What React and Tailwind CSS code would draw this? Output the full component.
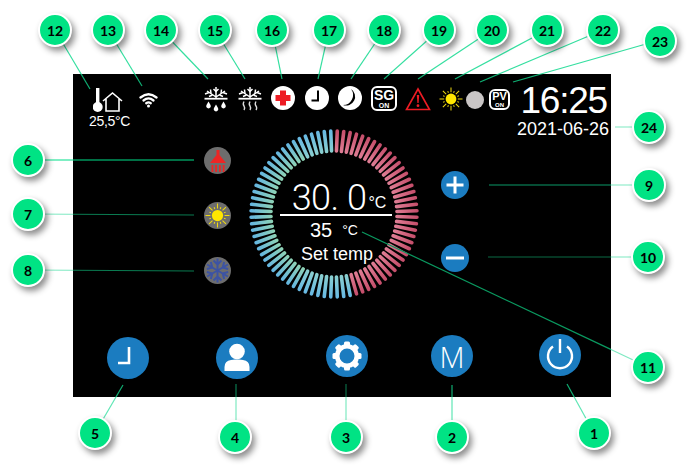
const leaders = [
  // x1, y1, x2, y2, colour on black, colour on white
  [55, 30, 90, 89, "#0fae72", "#35dfa0"],
  [108, 30, 142, 86, "#0fae72", "#35dfa0"],
  [161, 30, 208, 79, "#0fae72", "#35dfa0"],
  [215, 30, 245, 79, "#0fae72", "#35dfa0"],
  [272, 30, 282, 79, "#0fae72", "#35dfa0"],
  [329, 30, 318, 79, "#0fae72", "#35dfa0"],
  [384, 30, 351, 79, "#0fae72", "#35dfa0"],
  [439, 30, 384, 79, "#0fae72", "#35dfa0"],
  [492, 30, 418, 79, "#0fae72", "#35dfa0"],
  [547, 30, 455, 79, "#0fae72", "#35dfa0"],
  [603, 30, 480, 82, "#0fae72", "#35dfa0"],
  [660, 40, 513, 82, "#0fae72", "#35dfa0"],
  [615, 127, 649, 127, "#0fae72", "#7fe9c2"],
  [28, 160, 194, 160, "#00e08a", "#00e08a"],
  [28, 214, 194, 215, "#0a7a50", "#7fe9c2"],
  [28, 270, 194, 271, "#0a7a50", "#7fe9c2"],
  [649, 185, 489, 185, "#0b9a68", "#7fe9c2"],
  [648, 257, 488, 257, "#0a6a45", "#7fe9c2"],
  [648, 367, 362, 232, "#0a9a60", "#7fe9c2"],
  [95, 433, 123, 385, "#0fae72", "#5fe6b5"],
  [236, 437, 236, 384, "#0a7a50", "#7fe9c2"],
  [346, 437, 346, 384, "#0a6a45", "#7fe9c2"],
  [452, 437, 452, 385, "#0fae72", "#5fe6b5"],
  [594, 433, 567, 384, "#0fae72", "#5fe6b5"],
];

const badges = [
  ["1", "left-[577px] top-[416px]"],
  ["2", "left-[435px] top-[420px]"],
  ["3", "left-[329px] top-[420px]"],
  ["4", "left-[218px] top-[420px]"],
  ["5", "left-[78px] top-[416px]"],
  ["6", "left-[11px] top-[143px]"],
  ["7", "left-[11px] top-[197px]"],
  ["8", "left-[11px] top-[253px]"],
  ["9", "left-[632px] top-[168px]"],
  ["10", "left-[631px] top-[240px]"],
  ["11", "left-[631px] top-[350px]"],
  ["12", "left-[38px] top-[13px]"],
  ["13", "left-[91px] top-[13px]"],
  ["14", "left-[144px] top-[13px]"],
  ["15", "left-[198px] top-[13px]"],
  ["16", "left-[255px] top-[13px]"],
  ["17", "left-[312px] top-[13px]"],
  ["18", "left-[367px] top-[13px]"],
  ["19", "left-[422px] top-[13px]"],
  ["20", "left-[475px] top-[13px]"],
  ["21", "left-[530px] top-[13px]"],
  ["22", "left-[586px] top-[13px]"],
  ["23", "left-[643px] top-[24px]"],
  ["24", "left-[632px] top-[110px]"],
];

function Leaders() {
  return (
    <svg className="absolute inset-0" width="690" height="472">
      <defs>
        <clipPath id="onPanel">
          <rect x="73" y="74" width="538" height="323" />
        </clipPath>
        <clipPath id="offPanel">
          <path clipRule="evenodd" d="M0 0H690V472H0Z M73 74V397H611V74Z" />
        </clipPath>
      </defs>
      {leaders.map(([x1, y1, x2, y2, dark, light], i) => (
        <g key={i} strokeWidth="1.2">
          <line x1={x1} y1={y1} x2={x2} y2={y2} stroke={dark} clipPath="url(#onPanel)" />
          <line x1={x1} y1={y1} x2={x2} y2={y2} stroke={light} clipPath="url(#offPanel)" />
        </g>
      ))}
    </svg>
  );
}

function Badge({ n, pos }) {
  return (
    <div
      className={`absolute ${pos} flex h-[34px] w-[34px] items-center justify-center rounded-full border-2 border-white bg-[#00e384] font-['Lato',sans-serif] text-[14px] font-bold text-black shadow-[3px_4px_6px_rgba(0,0,0,0.45)]`}
    >
      {n}
    </div>
  );
}

function Thermo() {
  return (
    <svg width="30" height="26" viewBox="0 0 30 26" className="ml-[4px]">
      <rect x="3" y="1" width="3.4" height="18" fill="#fff" />
      <circle cx="4.7" cy="20" r="5" fill="#fff" />
      <path d="M10 14 L19.5 6 L29 14 M13 12 V24 H26 V12" fill="none" stroke="#fff" strokeWidth="1.6" />
    </svg>
  );
}

function Wifi() {
  return (
    <svg width="19" height="16" viewBox="0 0 19 16" fill="none" stroke="#fff" strokeWidth="2.3" strokeLinecap="round">
      <path d="M1.5 5.5 Q9.5 -1 17.5 5.5" />
      <path d="M4.5 8.5 Q9.5 4.3 14.5 8.5" />
      <path d="M7.2 11.2 Q9.5 9.6 11.8 11.2" />
      <circle cx="9.5" cy="14" r="1.5" fill="#fff" stroke="none" />
    </svg>
  );
}

function Flake() {
  return (
    <g stroke="#fff" strokeWidth="1.5" fill="none">
      <path d="M12 1 V12 M12 11 L3 5 M12 11 L21 5" />
      <path d="M9.5 3 L12 5.5 L14.5 3 M6.5 3.5 L7 7.5 M17.5 3.5 L17 7.5" />
      <path d="M1 8 L5 6.5 M23 8 L19 6.5 M5 10.5 L8.5 9 M19 10.5 L15.5 9" />
      <path d="M0.5 12.7 H23.5" strokeWidth="1.8" />
    </g>
  );
}

function SnowDrops() {
  return (
    <svg width="24" height="26" viewBox="0 0 24 26">
      <Flake />
      <path d="M4.5 15.5 L6.5 19 A2.3 2.3 0 1 1 2.5 19 Z" fill="#fff" />
      <path d="M12 18.5 L14 22 A2.3 2.3 0 1 1 10 22 Z" fill="#fff" />
      <path d="M19.5 15.5 L21.5 19 A2.3 2.3 0 1 1 17.5 19 Z" fill="#fff" />
    </svg>
  );
}

function SnowHeat() {
  return (
    <svg width="24" height="26" viewBox="0 0 24 26">
      <Flake />
      <g stroke="#ddd" strokeWidth="1.4" fill="none">
        <path d="M6 15.5 Q4.5 18 6 20 Q7.3 22 6 24" />
        <path d="M12 15.5 Q10.5 18 12 20 Q13.3 22 12 24" />
        <path d="M18 15.5 Q16.5 18 18 20 Q19.3 22 18 24" />
      </g>
    </svg>
  );
}

function CrossDisc() {
  return (
    <svg width="24" height="24" viewBox="0 0 24 24">
      <circle cx="12" cy="12" r="12" fill="#fff" />
      <path d="M9 4.5 H15 V9 H19.5 V15 H15 V19.5 H9 V15 H4.5 V9 H9 Z" fill="#ed1c24" />
    </svg>
  );
}

function ClockDisc() {
  return (
    <svg width="24" height="24" viewBox="0 0 24 24">
      <circle cx="12" cy="12" r="12" fill="#fff" />
      <path d="M13 4.5 V14.5 H6.5" fill="none" stroke="#000" strokeWidth="2" />
    </svg>
  );
}

function MoonDisc() {
  return (
    <svg width="24" height="24" viewBox="0 0 24 24">
      <circle cx="12" cy="12" r="12" fill="#fff" />
      <path d="M13 3 A9 9 0 0 1 5 19 A10 10 0 0 0 13 3 Z" fill="#000" />
    </svg>
  );
}

function Warning() {
  return (
    <svg width="26" height="24" viewBox="0 0 26 24">
      <path d="M13 2 L24.5 22.5 H1.5 Z" fill="none" stroke="#ed1c24" strokeWidth="1.6" />
      <path d="M11.8 8 H14.2 L13.6 16 H12.4 Z" fill="#ed1c24" />
      <circle cx="13" cy="18.7" r="1.4" fill="#ed1c24" />
    </svg>
  );
}

function Sun({ size = 24, ray = 1 }) {
  const rays = Array.from({ length: 16 }, (_, i) => (i * 360) / 16);
  return (
    <svg width={size} height={size} viewBox="0 0 24 24">
      <circle cx="12" cy="12" r="5.4" fill="#ffe600" />
      {rays.map((a, i) => (
        <line
          key={a}
          x1="12"
          y1={i % 2 ? 3.5 : 0.5}
          x2="12"
          y2="5.2"
          stroke="#f0da12"
          strokeWidth={ray}
          transform={`rotate(${a} 12 12)`}
        />
      ))}
    </svg>
  );
}

function OnBox({ label, className, labelClass, onClass }) {
  return (
    <div className={`flex flex-col items-center justify-center rounded-[6px] border-2 border-white font-bold leading-none text-white ${className}`}>
      <span className={labelClass}>{label}</span>
      <span className={onClass}>ON</span>
    </div>
  );
}

function Shower() {
  return (
    <svg width="18" height="22" viewBox="0 0 18 22" fill="#ed2524">
      <path d="M7.5 0 H10.5 V5 L17 13 H1 L7.5 5 Z" />
      <rect x="2.5" y="15" width="1.8" height="7" />
      <rect x="6.2" y="15" width="1.8" height="7" />
      <rect x="10" y="15" width="1.8" height="7" />
      <rect x="13.7" y="15" width="1.8" height="7" />
    </svg>
  );
}

function Snowflake() {
  const arms = [0, 60, 120, 180, 240, 300];
  return (
    <svg width="27" height="27" viewBox="0 0 27 27" fill="none" stroke="#3c53a4" strokeWidth="2">
      {arms.map((a) => (
        <path key={a} d="M13.5 13.5 V1.5 M9.5 3.5 L13.5 7.5 L17.5 3.5" transform={`rotate(${a} 13.5 13.5)`} />
      ))}
    </svg>
  );
}

function ModeDisc({ children, className = "" }) {
  return (
    <div className={`flex h-[27px] w-[27px] items-center justify-center overflow-hidden rounded-full bg-[#6d6d6d] ${className}`}>
      {children}
    </div>
  );
}

function Dial() {
  const ticks = Array.from({ length: 80 }, (_, i) => 2.25 + i * 4.5);
  return (
    <svg className="absolute inset-0" width="170" height="170" viewBox="0 0 170 170">
      <defs>
        <radialGradient id="red" gradientUnits="userSpaceOnUse" cx="85" cy="85" r="85">
          <stop offset="0.72" stopColor="#e07f96" />
          <stop offset="1" stopColor="#c44c69" />
        </radialGradient>
        <radialGradient id="teal" gradientUnits="userSpaceOnUse" cx="85" cy="85" r="85">
          <stop offset="0.72" stopColor="#8fd3b4" />
          <stop offset="1" stopColor="#62b4e2" />
        </radialGradient>
        <radialGradient id="blue" gradientUnits="userSpaceOnUse" cx="85" cy="85" r="85">
          <stop offset="0.72" stopColor="#8bd0cf" />
          <stop offset="1" stopColor="#66b8e4" />
        </radialGradient>
      </defs>
      {ticks.map((a) => {
        const paint = a < 165 ? "red" : a < 205 || a > 335 ? "blue" : "teal";
        return (
          <line
            key={a}
            x1="85"
            y1="2"
            x2="85"
            y2="22"
            stroke={`url(#${paint})`}
            strokeWidth="3.6"
            strokeLinecap="round"
            transform={`rotate(${a} 85 85)`}
          />
        );
      })}
    </svg>
  );
}

function RoundButton({ children, className = "" }) {
  return (
    <div className={`flex h-[42px] w-[42px] items-center justify-center overflow-hidden rounded-full bg-[#1b7cc0] ${className}`}>
      {children}
    </div>
  );
}

function StepButton({ d, className = "" }) {
  return (
    <div className={`flex h-[28px] w-[28px] items-center justify-center rounded-full bg-[#1b7cc0] ${className}`}>
      <svg width="20" height="20" viewBox="0 0 20 20">
        <path d={d} stroke="#fff" strokeWidth="3" fill="none" />
      </svg>
    </div>
  );
}

export default function App() {
  const teeth = [0, 45, 90, 135, 180, 225, 270, 315];
  return (
    <div className="relative h-[472px] w-[690px] overflow-hidden bg-white pl-[73px] pt-[74px] font-['Liberation_Sans',sans-serif]">
      <div className="flex h-[323px] w-[538px] flex-col bg-black text-white">
        {/* Status bar */}
        <div className="flex h-[55px] items-start">
          <div className="ml-[16px] mt-[13px] flex w-[40px] flex-col">
            <Thermo />
            <span className="whitespace-nowrap text-[14px] leading-[16px] tracking-[-0.3px]">25,5°C</span>
          </div>
          <div className="ml-[10px] mt-[18px]"><Wifi /></div>
          <div className="ml-[46px] mt-[12px]"><SnowDrops /></div>
          <div className="ml-[10px] mt-[12px]"><SnowHeat /></div>
          <div className="ml-[9px] mt-[12px]"><CrossDisc /></div>
          <div className="ml-[10px] mt-[12px]"><ClockDisc /></div>
          <div className="ml-[9px] mt-[12px]"><MoonDisc /></div>
          <OnBox
            label="SG"
            className="ml-[9px] mt-[12px] h-[25px] w-[26px]"
            labelClass="text-[14px]"
            onClass="text-[7px]"
          />
          <div className="ml-[8px] mt-[13px]"><Warning /></div>
          <div className="ml-[8px] mt-[13px]"><Sun /></div>
          <div className="ml-[3px] mt-[17px] h-[18px] w-[18px] rounded-full bg-[#c9c5c5]" />
          <OnBox
            label="PV"
            className="ml-[5px] mt-[15px] h-[21px] w-[21px]"
            labelClass="text-[11px]"
            onClass="text-[6px]"
          />
          <div className="ml-[7px] mt-[9px] flex w-[92px] flex-col items-end whitespace-nowrap">
            <span className="pr-[2px] text-[37px] leading-[36px] tracking-[-1.2px]">16:25</span>
            <span className="text-[18px] leading-[20px]">2021-06-26</span>
          </div>
        </div>

        {/* Modes, dial and set buttons */}
        <div className="flex h-[170px] items-start">
          <div className="ml-[131px] mt-[18px] flex flex-col gap-[28px]">
            <ModeDisc><Shower /></ModeDisc>
            <ModeDisc><Sun size={25} /></ModeDisc>
            <ModeDisc><Snowflake /></ModeDisc>
          </div>
          <div className="relative ml-[18px] flex h-[170px] w-[170px] flex-col items-center">
            <Dial />
            <div className="relative ml-[4px] mt-[51px] flex h-[36px] w-[112px] items-end justify-center border-b-2 border-white pl-[6px]">
              <span className="mb-[-2px] whitespace-nowrap font-['Roboto',sans-serif] text-[36px] font-light leading-[36px] tracking-[-0.5px]">30. 0</span>
              <span className="mb-[2px] ml-[2px] text-[16px] leading-[18px]">°C</span>
            </div>
            <div className="relative ml-[4px] mt-[2px] flex h-[24px] w-[112px] items-center">
              <span className="ml-[30px] text-[20px] leading-[24px]">35</span>
              <span className="ml-[10px] text-[14px] leading-[18px]">°C</span>
            </div>
            <span className="relative ml-[6px] mt-[1px] whitespace-nowrap text-[18px] leading-[22px]">Set temp</span>
          </div>
          <div className="ml-[22px] mt-[42px] flex flex-col gap-[45px]">
            <StepButton d="M10 1.5 V18.5 M1.5 10 H18.5" />
            <StepButton d="M1 10 H19" />
          </div>
        </div>

        {/* Bottom buttons */}
        <div className="flex items-start pl-[34px]">
          <RoundButton className="mt-[38px]">
            <svg width="42" height="42" viewBox="0 0 42 42">
              <path d="M22 10 V26 H11" fill="none" stroke="#fff" strokeWidth="2.6" />
            </svg>
          </RoundButton>
          <RoundButton className="ml-[67px] mt-[38px]">
            <svg width="42" height="42" viewBox="0 0 42 42" fill="#fff">
              <circle cx="21" cy="14.5" r="7.8" />
              <path d="M8.5 34 V30 Q8.5 24 15 23 L19 22.5 H23 L27 23 Q33.5 24 33.5 30 V34 Z" />
            </svg>
          </RoundButton>
          <RoundButton className="ml-[68px] mt-[36px]">
            <svg width="42" height="42" viewBox="0 0 42 42">
              <circle cx="21" cy="21" r="9.8" fill="none" stroke="#fff" strokeWidth="4.6" />
              {teeth.map((a) => (
                <rect key={a} x="18" y="6.5" width="6" height="6" rx="1.5" fill="#fff" transform={`rotate(${a} 21 21)`} />
              ))}
            </svg>
          </RoundButton>
          <RoundButton className="ml-[63px] mt-[36px] font-['Open_Sans',sans-serif] text-[29px] font-light leading-none">M</RoundButton>
          <RoundButton className="ml-[66px] mt-[35px]">
            <svg width="42" height="42" viewBox="0 0 42 42" fill="none" stroke="#fff" strokeWidth="2.4">
              <path d="M21 5 V19" />
              <path d="M14 12.5 A12 12 0 1 0 28 12.5" />
            </svg>
          </RoundButton>
        </div>
      </div>

      <Leaders />
      {badges.map(([n, pos]) => (
        <Badge key={n} n={n} pos={pos} />
      ))}
    </div>
  );
}
